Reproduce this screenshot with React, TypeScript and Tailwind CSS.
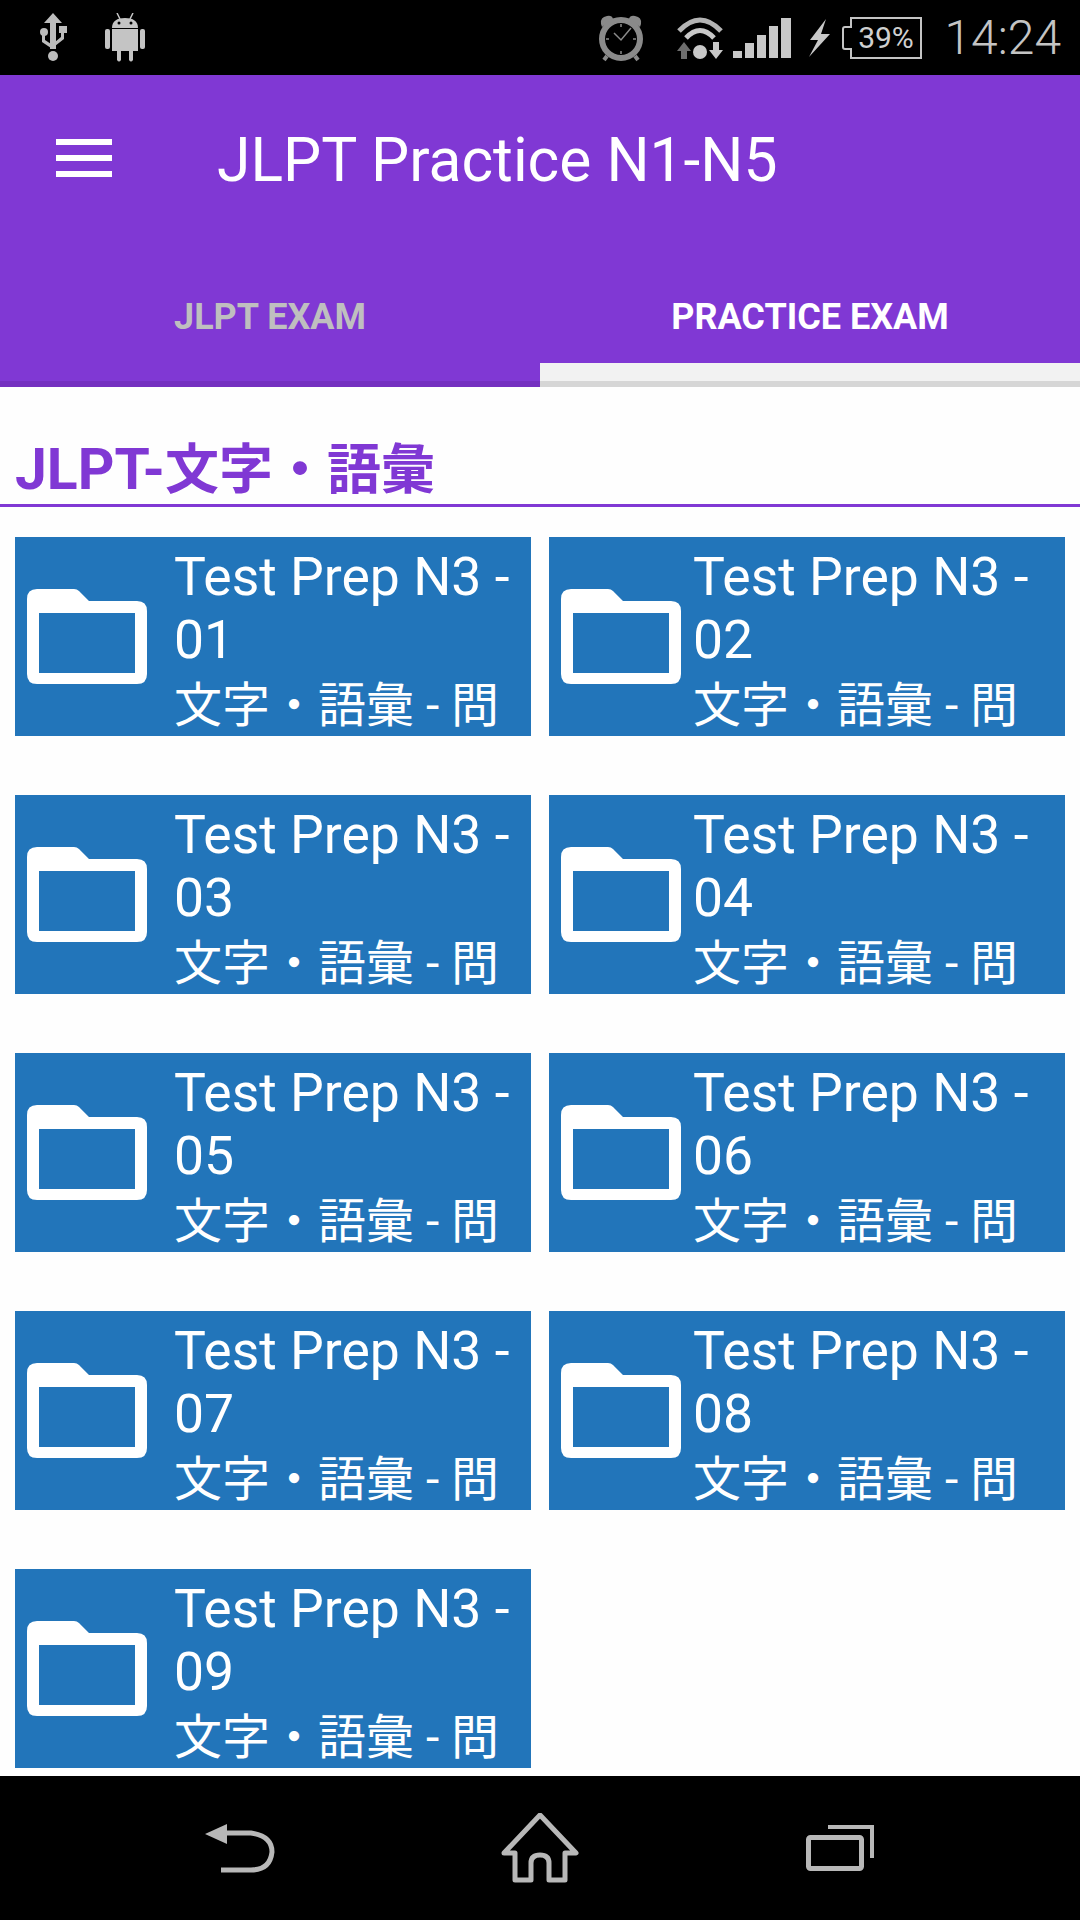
const sets = ['01', '02', '03', '04', '05', '06', '07', '08', '09'];

function FolderIcon() {
  return (
    <svg width="120" height="95" viewBox="0 0 120 95" className="shrink-0 self-center" fill="white">
      <path
        fillRule="evenodd"
        d="M10 0H47Q50 0 52 2L62 12H110Q120 12 120 22V85Q120 95 110 95H10Q0 95 0 85V10Q0 0 10 0ZM12 24V84H108V24Z"
      />
    </svg>
  );
}

function ExamCard({ num, right }: { num: string; right: boolean }) {
  return (
    <div className="flex h-[199px] overflow-hidden bg-[#2275ba] pl-[12px] text-white">
      <FolderIcon />
      <div className={`${right ? 'ml-[12px]' : 'ml-[27px]'} min-w-0 flex-1 pt-[8px] text-[53.5px] leading-[63px]`}>
        <div>Test Prep N3 -</div>
        <div>{num}</div>
        <div className="pt-[2px] font-['Roboto','Noto_Sans_CJK_JP',sans-serif] text-[48px] leading-[66px] whitespace-nowrap">文字・語彙 - 問</div>
      </div>
    </div>
  );
}

function StatusBar() {
  return (
    <div className="flex h-[75px] shrink-0 items-center bg-black">
      <svg width="28" height="50" viewBox="0 0 28 50" className="ml-[39px] mt-[1px]" fill="#bdbdbd">
        <path d="M14 0L23 10H17V36H11V10H5Z" />
        <circle cx="14" cy="43" r="5" />
        <circle cx="5" cy="19" r="4" />
        <rect x="20" y="13" width="8" height="7" />
        <path d="M3 22H6V27L12 31V35L3 29ZM22 19H25V26L16 33V29L22 24Z" />
      </svg>
      <svg width="40" height="50" viewBox="0 0 40 50" className="ml-[38px]" fill="#c4c4c4">
        <path d="M7 15C7 8 12 5 20 5S33 8 33 15Z" />
        <path d="M12 0L15 6M28 0L25 6" stroke="#c4c4c4" strokeWidth="1.5" />
        <circle cx="14" cy="10" r="1.5" fill="black" />
        <circle cx="26" cy="10" r="1.5" fill="black" />
        <path d="M7 16H33V38H28V47Q26 50 24 47V38H16V47Q14 50 12 47V38H7Z" />
        <rect x="0" y="16" width="5" height="20" rx="2" />
        <rect x="35" y="16" width="5" height="20" rx="2" />
      </svg>

      <div className="ml-auto flex items-center pr-[19px]">
        <svg width="46" height="48" viewBox="0 0 46 48">
          <path d="M3 10Q2 3 9 2Q14 1 15 5L4 13ZM43 10Q44 3 37 2Q32 1 31 5L42 13Z" fill="#8a8a8a" />
          <circle cx="23" cy="25" r="19" fill="none" stroke="#8a8a8a" strokeWidth="6" />
          <path d="M9 42L6 46M37 42L40 46" stroke="#8a8a8a" strokeWidth="4" />
          <path d="M23 10V13M23 37V40M8 25H11M35 25H38M33 14L23 26L16 19" fill="none" stroke="#8a8a8a" strokeWidth="1.5" />
        </svg>
        <svg width="46" height="44" viewBox="0 0 46 44" className="ml-[33px]">
          <path d="M2 15Q23 -7 44 15" fill="none" stroke="#b4b4b4" strokeWidth="5" />
          <path d="M9 22Q23 7 37 22" fill="none" stroke="#c8c8c8" strokeWidth="5" />
          <circle cx="23" cy="36" r="7" fill="#c8c8c8" />
          <path d="M7 26L14 35H10V43H4V35H0Z" fill="#6e6e6e" />
          <path d="M36 26H42V34H46L39 43L32 34H36Z" fill="#c8c8c8" />
        </svg>
        <svg width="58" height="40" viewBox="0 0 58 40" className="ml-[10px] mt-[1px]" fill="#c8c8c8">
          <rect x="0" y="33" width="9" height="7" />
          <rect x="12" y="25" width="9" height="15" />
          <rect x="24" y="17" width="9" height="23" />
          <rect x="36" y="8" width="9" height="32" />
          <rect x="48" y="0" width="10" height="40" />
        </svg>
        <svg width="26" height="38" viewBox="0 0 22 38" className="ml-[15px]" fill="#c8c8c8">
          <path d="M18 0L2 21H10L1 38L22 15H13Z" />
        </svg>
        <svg width="80" height="42" viewBox="0 0 80 42" className="ml-[10px]">
          <path d="M9 10V1H79V41H9V32H3Q1 32 1 30V12Q1 10 3 10Z" fill="none" stroke="#c4c4c4" strokeWidth="2" />
          <text x="44" y="31" textAnchor="middle" fontFamily="Roboto, sans-serif" fontSize="30" fill="#d0d0d0">39%</text>
        </svg>
        <div className="ml-[22px] text-[48px] font-light leading-none text-[#c4c4c4]">14:24</div>
      </div>
    </div>
  );
}

function NavBar() {
  return (
    <div className="flex h-[144px] shrink-0 items-center bg-black">
      <svg width="72" height="50" viewBox="0 0 72 50" className="ml-[205px] mt-[1px]">
        <path d="M0 10L22 0V20Z" fill="#b8b8b8" />
        <path d="M20 9H46Q67 12 67 28Q65 46 46 46H16" fill="none" stroke="#b8b8b8" strokeWidth="5" />
      </svg>
      <svg width="78" height="70" viewBox="0 0 78 70" className="ml-[224px]">
        <path
          d="M39 2L75 40H64V67H48V50Q48 42 39 42T30 50V67H14V40H3Z"
          fill="none"
          stroke="#b8b8b8"
          strokeWidth="5"
          strokeLinejoin="round"
        />
      </svg>
      <svg width="68" height="46" viewBox="0 0 68 46" className="ml-[227px]">
        <path d="M22 2H66V33" fill="none" stroke="#b8b8b8" strokeWidth="4" />
        <rect x="2.5" y="12.5" width="53" height="31" rx="2" fill="none" stroke="#b8b8b8" strokeWidth="5" />
      </svg>
    </div>
  );
}

export default function App() {
  return (
    <div className="flex h-[1920px] w-[1080px] flex-col overflow-hidden bg-[#fefefe] font-['Roboto',sans-serif]">
      <StatusBar />

      <div className="h-[312px] shrink-0 bg-[#8038d4]">
        <div className="flex h-[170px] items-center pl-[56px]">
          <div className="flex w-[56px] -translate-y-[2px] flex-col gap-[10px]">
            <div className="h-[6px] bg-white" />
            <div className="h-[6px] bg-white" />
            <div className="h-[6px] bg-white" />
          </div>
          <h1 className="ml-[105px] pt-[2px] text-[60.5px] leading-none font-normal text-white">JLPT Practice N1-N5</h1>
        </div>
        <div className="grid h-[142px] grid-cols-2">
          <div className="flex flex-col border-b-[6px] border-[#7430c0]">
            <div className="flex flex-1 items-center justify-center pt-[8px] text-[36px] font-bold text-[#bfbfbf]">JLPT EXAM</div>
          </div>
          <div className="flex flex-col">
            <div className="flex flex-1 items-center justify-center pt-[26px] text-[36px] font-bold text-white">PRACTICE EXAM</div>
            <div className="h-[24px] border-b-[6px] border-[#d6d6d6] bg-[#f2f2f2]" />
          </div>
        </div>
      </div>

      <div className="min-h-0 flex-1">
        <div className="border-b-[3px] border-[#8038d4] px-[15px] pt-[50px]">
          <h2 className="font-['Roboto','Noto_Sans_CJK_JP',sans-serif] text-[57px] leading-[66px] font-bold text-[#8038d4]">
            JLPT-<span className="text-[54px]">文字・語彙</span>
          </h2>
        </div>
        <div className="grid grid-cols-2 gap-x-[18px] gap-y-[59px] px-[15px] pt-[30px]">
          {sets.map((num, i) => (
            <ExamCard key={num} num={num} right={i % 2 === 1} />
          ))}
        </div>
      </div>

      <NavBar />
    </div>
  );
}
